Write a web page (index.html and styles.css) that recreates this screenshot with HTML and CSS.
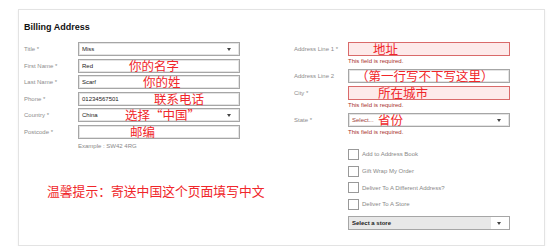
FILE: index.html
```html
<!DOCTYPE html>
<html lang="en">

<head>
    <meta charset="UTF-8">
    <title>Billing Address</title>
    <link rel="stylesheet" href="styles.css">
</head>

<body>

    <div class="card">
        <h2 class="card-title">Billing Address</h2>

        <div class="columns">
            <div class="col">
                <div class="field">
                    <label>Title *</label>
                    <div class="box select"><span class="value">Miss</span><i class="arrow"></i></div>
                </div>
                <div class="field">
                    <label>First Name *</label>
                    <div class="box"><span class="value">Red</span><span class="note note-name">你的名字</span></div>
                </div>
                <div class="field">
                    <label>Last Name *</label>
                    <div class="box"><span class="value">Scarf</span><span class="note note-last">你的姓</span></div>
                </div>
                <div class="field">
                    <label>Phone *</label>
                    <div class="box"><span class="value">01234567501</span><span class="note note-phone">联系电话</span></div>
                </div>
                <div class="field">
                    <label>Country *</label>
                    <div class="box select"><span class="value">China</span><span class="note note-country">选择“中国”</span><i class="arrow"></i></div>
                </div>
                <div class="field">
                    <label>Postcode *</label>
                    <div class="box"><span class="note note-post">邮编</span></div>
                </div>
                <p class="example">Example : SW42 4RG</p>

                <p class="hint">温馨提示：寄送中国这个页面填写中文</p>
            </div>

            <div class="col">
                <div class="field">
                    <label>Address Line 1 *</label>
                    <div class="box invalid"><span class="note note-addr">地址</span></div>
                </div>
                <p class="error">This field is required.</p>
                <div class="field">
                    <label>Address Line 2</label>
                    <div class="box"><span class="note note-addr2">（第一行写不下写这里）</span></div>
                </div>
                <div class="field">
                    <label>City *</label>
                    <div class="box invalid"><span class="note note-city">所在城市</span></div>
                </div>
                <p class="error">This field is required.</p>
                <div class="field">
                    <label>State *</label>
                    <div class="box select"><span class="placeholder">Select...</span><span class="note note-state">省份</span><i class="arrow"></i></div>
                </div>
                <p class="error">This field is required.</p>

                <div class="checks">
                    <div class="check"><span class="tick"></span>Add to Address Book</div>
                    <div class="check"><span class="tick"></span>Gift Wrap My Order</div>
                    <div class="check"><span class="tick"></span>Deliver To A Different Address?</div>
                    <div class="check"><span class="tick"></span>Deliver To A Store</div>
                </div>

                <div class="store-select">
                    <span class="store-text">Select a store</span>
                    <span class="store-btn"><i class="arrow"></i></span>
                </div>
            </div>
        </div>
    </div>

</body>

</html>
```

FILE: styles.css
```css
* {
    margin: 0;
    padding: 0;
    box-sizing: border-box;
}

body {
    background: #fff;
    font-family: "Liberation Sans", Arial, sans-serif;
    color: #222;
}

.card {
    margin: 9px 0 0 18px;
    width: 527px;
    height: 237px;
    border: 1px solid #e3e3e3;
    box-shadow: 0 1px 2px rgba(0, 0, 0, 0.06);
    padding: 11px 0 0 5px;
}

.card-title {
    font-size: 9px;
    font-weight: 700;
    line-height: 12px;
    color: #111;
    margin-bottom: 9px;
}

.columns {
    display: flex;
    gap: 54px;
}

.col {
    width: 216px;
}

.field {
    display: flex;
    align-items: center;
    height: 14px;
    margin-bottom: 2.6px;
}

.field label {
    width: 54px;
    font-size: 6px;
    color: #8c8c8c;
}

.box {
    position: relative;
    flex: 1;
    height: 14px;
    border: 1px solid #a6a6a6;
    box-shadow: inset 0 0 0 1px #e4e4e4;
    display: flex;
    align-items: center;
    padding: 0 3px;
    font-size: 6px;
    background: #fff;
}

.box.invalid {
    background: #fdeaea;
    border-color: #d96a6a;
    box-shadow: none;
}

.value {
    color: #222;
}

.placeholder {
    color: #a0403a;
}

.arrow {
    position: absolute;
    right: 8px;
    top: 5px;
    border-left: 2.5px solid transparent;
    border-right: 2.5px solid transparent;
    border-top: 3px solid #444;
}

/* red annotations written over the form */
.note {
    position: absolute;
    top: -2px;
    font-family: "Noto Sans CJK SC", sans-serif;
    font-size: 12.5px;
    line-height: 15px;
    color: #f0262a;
    white-space: nowrap;
}

.note-name { left: 50px; }
.note-last { left: 64px; }
.note-phone { left: 75px; }
.note-country { left: 46px; }
.note-post { left: 51px; }
.note-addr { left: 24px; }
.note-addr2 { left: 7px; }
.note-city { left: 29px; }
.note-state { left: 29px; }

.example {
    margin: 1px 0 0 54px;
    font-size: 6px;
    line-height: 9px;
    color: #888;
}

.hint {
    margin: 32px 0 0 23px;
    font-family: "Noto Sans CJK SC", sans-serif;
    font-size: 12.8px;
    line-height: 16px;
    color: #f0262a;
    white-space: nowrap;
}

.error {
    margin: -2.6px 0 2.6px 54px;
    height: 10.4px;
    line-height: 10px;
    font-size: 6px;
    color: #a8322d;
}

.checks {
    margin: 12px 0 0 54px;
}

.check {
    display: flex;
    align-items: center;
    height: 11px;
    margin-bottom: 5.67px;
    font-size: 6px;
    color: #888;
}

.tick {
    width: 11px;
    height: 11px;
    border: 1px solid #999;
    background: #fff;
    margin-right: 3px;
}

.store-select {
    position: relative;
    margin-left: 54px;
    height: 14px;
    border: 1px solid #a6a6a6;
    display: flex;
    background: #e8e8e8;
}

.store-text {
    flex: 1;
    display: flex;
    align-items: center;
    padding-left: 3px;
    font-size: 6px;
    font-weight: 700;
    color: #222;
}

.store-btn {
    position: relative;
    width: 18px;
    background: #fff;
}
```
